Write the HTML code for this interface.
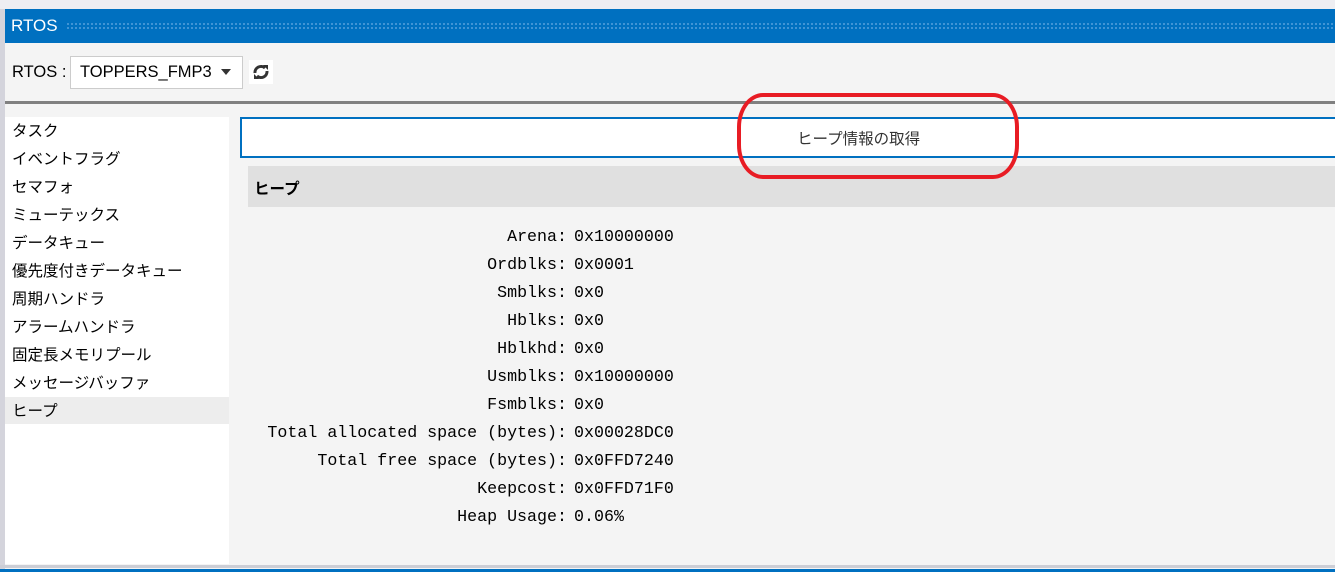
<!DOCTYPE html>
<html><head><meta charset="utf-8"><style>
*{margin:0;padding:0;box-sizing:border-box}
body{width:1335px;height:572px;overflow:hidden;background:#f4f4f4;position:relative;font-family:"Liberation Sans","Noto Sans CJK JP",sans-serif;color:#000}
.a{position:absolute}
.li{position:absolute;left:12px;font-size:15.5px;line-height:28px;height:28px}
.row{position:absolute;font-family:"Liberation Mono","Noto Sans CJK JP",monospace;font-size:16.65px;line-height:28px;white-space:pre}
.lab{right:768px;text-align:right}
.val{left:574px}
</style></head><body>
<div class="a" style="left:0;top:0;width:1335px;height:9px;background:#eeeef2"></div>
<div class="a" style="left:0;top:9px;width:5px;height:563px;background:#d4d4dc"></div>
<div class="a" style="left:5px;top:9px;width:1330px;height:34px;background:#0070c0"></div>
<div class="a" style="left:66px;top:22px;width:1269px;height:8px;background-image:radial-gradient(circle,#4a9ad8 0.9px,transparent 1.2px);background-size:4px 4px"></div>
<div class="a" style="left:11px;top:16px;color:#fff;font-size:17px">RTOS</div>
<div class="a" style="left:12px;top:63px;font-size:16.5px">RTOS :</div>
<div class="a" style="left:70px;top:56px;width:173px;height:33px;border:1px solid #ccc;background:#fff"></div>
<div class="a" style="left:80px;top:63px;font-size:16.5px">TOPPERS_FMP3</div>
<div class="a" style="left:221px;top:69px;width:0;height:0;border-left:5px solid transparent;border-right:5px solid transparent;border-top:6px solid #333"></div>
<svg class="a" style="left:249px;top:60px" width="24" height="24" viewBox="0 0 24 24"><rect width="24" height="24" fill="#fff"/><path d="M6 13a6 6 0 0 1 10-5" stroke="#333" stroke-width="3" fill="none"/><path d="M14 5h5v5z" fill="#333"/><path d="M18 11a6 6 0 0 1-10 5" stroke="#333" stroke-width="3" fill="none"/><path d="M10 19H5v-5z" fill="#333"/></svg>
<div class="a" style="left:5px;top:101px;width:1330px;height:3px;background:#808080"></div>
<div class="a" style="left:5px;top:117px;width:224px;height:447px;background:#fff"></div>
<div class="a" style="left:5px;top:397px;width:224px;height:27px;background:#ededed"></div>
<div class="li" style="top:118px">タスク</div>
<div class="li" style="top:146px">イベントフラグ</div>
<div class="li" style="top:174px">セマフォ</div>
<div class="li" style="top:202px">ミューテックス</div>
<div class="li" style="top:230px">データキュー</div>
<div class="li" style="top:258px">優先度付きデータキュー</div>
<div class="li" style="top:286px">周期ハンドラ</div>
<div class="li" style="top:314px">アラームハンドラ</div>
<div class="li" style="top:342px">固定長メモリプール</div>
<div class="li" style="top:370px">メッセージバッファ</div>
<div class="li" style="top:398px">ヒープ</div>
<div class="a" style="left:240px;top:117px;width:1100px;height:41px;border:2px solid #0070c0;background:#fff"></div>
<div class="a" style="left:797px;top:127px;font-size:15.5px;color:#333">ヒープ情報の取得</div>
<div class="a" style="left:248px;top:166px;width:1087px;height:41px;background:#e0e0e0"></div>
<div class="a" style="left:254px;top:177px;font-size:15.5px;font-weight:bold">ヒープ</div>
<div class="row lab" style="top:223px">Arena:</div><div class="row val" style="top:223px">0x10000000</div>
<div class="row lab" style="top:251px">Ordblks:</div><div class="row val" style="top:251px">0x0001</div>
<div class="row lab" style="top:279px">Smblks:</div><div class="row val" style="top:279px">0x0</div>
<div class="row lab" style="top:307px">Hblks:</div><div class="row val" style="top:307px">0x0</div>
<div class="row lab" style="top:335px">Hblkhd:</div><div class="row val" style="top:335px">0x0</div>
<div class="row lab" style="top:363px">Usmblks:</div><div class="row val" style="top:363px">0x10000000</div>
<div class="row lab" style="top:391px">Fsmblks:</div><div class="row val" style="top:391px">0x0</div>
<div class="row lab" style="top:419px">Total allocated space (bytes):</div><div class="row val" style="top:419px">0x00028DC0</div>
<div class="row lab" style="top:447px">Total free space (bytes):</div><div class="row val" style="top:447px">0x0FFD7240</div>
<div class="row lab" style="top:475px">Keepcost:</div><div class="row val" style="top:475px">0x0FFD71F0</div>
<div class="row lab" style="top:503px">Heap Usage:</div><div class="row val" style="top:503px">0.06%</div>
<div class="a" style="left:0;top:565px;width:1335px;height:3px;background:#ccced6"></div>
<div class="a" style="left:0;top:569px;width:1335px;height:3px;background:#0070c0"></div>
<div class="a" style="left:737px;top:93px;width:282px;height:86px;border:4px solid #e81c24;border-radius:26px/34px"></div>
</body></html>
